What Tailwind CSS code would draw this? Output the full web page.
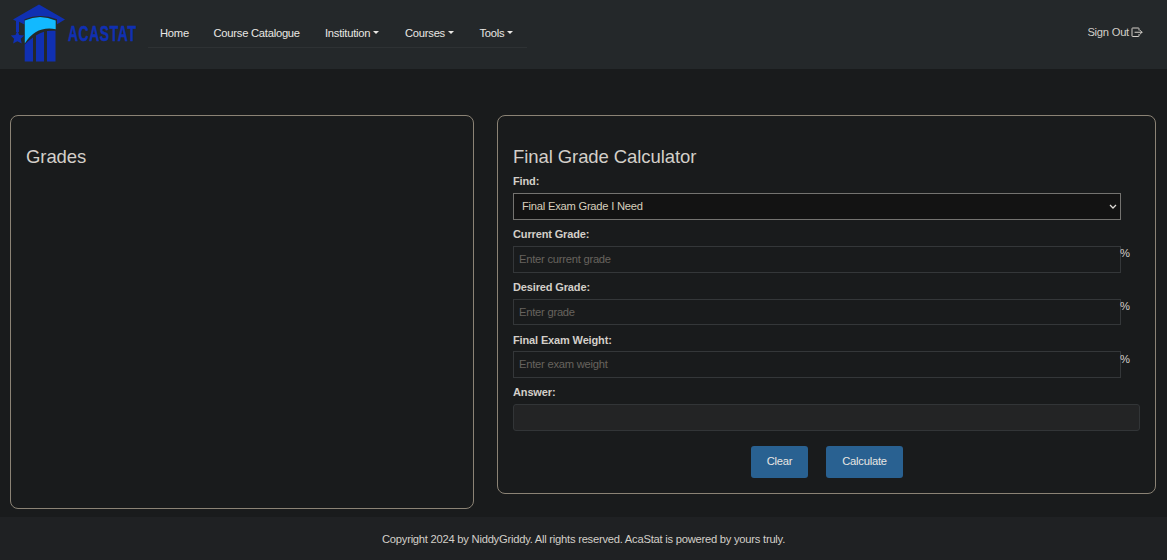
<!DOCTYPE html>
<html lang="en">
<head>
<meta charset="utf-8">
<title>AcaStat</title>
<script src="https://cdn.jsdelivr.net/npm/@tailwindcss/browser@4"></script>
</head>
<body class="h-[560px] overflow-hidden bg-[#191b1c] font-['Liberation_Sans',Arial,sans-serif] text-[11.200px] tracking-[-0.240px] leading-4 text-[#d3cfc9] flex flex-col">
<header class="h-[69px] shrink-0 bg-[#24282a] flex">
  <a class="w-[148px] shrink-0" aria-label="AcaStat">
    <svg width="148" height="69" viewBox="0 0 148 69">
      <g fill="#1030b2">
        <path d="M39 4.500 65 19.500 57 24.300V19.300Q40 12.500 24.500 19.300V24.500L19 21.800V32H16V21L13 19.500Z"/>
        <path d="M17.400 30.500 19.300 35 24.200 35.500 20.700 38.800 21.700 43.600 17.400 41.300 13.100 43.600 14.100 38.800 10.800 35.500 15.500 35Z"/>
        <path d="M24.700 44.500Q28.500 40.500 33 37.500V61.500H24.700ZM36 35.500Q40 33 44 31.700V61.500H36ZM47 31Q51 30.400 55.500 30.800V61.500H47Z"/>
      </g>
      <path fill="#12b9ff" d="M24.800 20.500Q40 13.500 55.700 20.500V29.200Q36 25.500 24.800 43.500Z"/>
      <text transform="translate(67.900 41) scale(.61 1)" font-family="Liberation Sans" font-weight="700" font-size="22.800" letter-spacing="1" stroke="#1030b2" stroke-width="0.500" fill="#1030b2">ACASTAT</text>
    </svg>
  </a>
  <nav class="mt-[18px] h-[30px] w-[379px] border-b border-[#2e3234] flex items-center text-[#e9e7e4] pl-3 whitespace-nowrap">
    <a class="w-[53.500px]">Home</a>
    <a class="w-[111.500px]">Course Catalogue</a>
    <a class="w-[80px] flex items-center gap-[3px]">Institution<i class="border-x-[3px] border-t-[3px] border-x-transparent"></i></a>
    <a class="w-[74.500px] flex items-center gap-[3px]">Courses<i class="border-x-[3px] border-t-[3px] border-x-transparent"></i></a>
    <a class="flex items-center gap-[3px]">Tools<i class="border-x-[3px] border-t-[3px] border-x-transparent"></i></a>
  </nav>
  <a class="ml-auto mr-6 mt-6 h-4 flex items-center gap-[2px]">Sign Out
    <svg width="12" height="11" viewBox="0 0 12 11" fill="none" stroke="#d3cfc9" stroke-linecap="round" stroke-linejoin="round"><path d="M8 3V1.500Q8 1 7.500 1H1.500Q1 1 1 1.500V9Q1 9.500 1.500 9.500H7.500Q8 9.500 8 9V7.500M4 5.250H11M9 3.250 11 5.250 9 7.250"/></svg>
  </a>
</header>
<main class="h-[448px] shrink-0 pt-[46px] pl-[10px] flex items-start gap-[23px]">
  <section class="w-[464px] h-[394px] rounded-lg border border-[#8b8375] pl-[15px] pt-[30px]">
    <h2 class="text-[18.500px] tracking-[-0.080px] leading-[22px]">Grades</h2>
  </section>
  <section class="w-[659px] h-[379px] rounded-lg border border-[#8b8375] pl-[15px] pt-[30px]">
    <h2 class="text-[18.500px] tracking-[-0.080px] leading-[22px]">Final Grade Calculator</h2>
    <label class="block mt-[5px] font-bold text-[11px] tracking-[-0.140px]">Find:</label>
    <div class="mt-[4px] w-[608px] h-[27px] border border-[#747370] bg-[#131313] flex items-center justify-between pl-[8px] pr-[3px] text-[#d8cfbd]"><span class="pb-px">Final Exam Grade I Need</span>
      <svg width="8" height="6" viewBox="0 0 8 6" fill="none" stroke="#dedbd6" stroke-width="1.300"><path d="M1 1 4 4 7 1"/></svg>
    </div>
    <label class="block mt-[6px] font-bold text-[11px] tracking-[-0.140px]">Current Grade:</label>
    <div class="mt-[4px] flex items-start"><div class="w-[608px] h-[27px] border border-[#343739] flex items-center pl-[5px] pb-px text-[#67635e]">Enter current grade</div><span class="-mt-px -ml-px">%</span></div>
    <label class="block mt-[6px] font-bold text-[11px] tracking-[-0.140px]">Desired Grade:</label>
    <div class="mt-[4px] flex items-start"><div class="w-[608px] h-[26px] border border-[#343739] flex items-center pl-[5px] pb-px text-[#67635e]">Enter grade</div><span class="-mt-px -ml-px">%</span></div>
    <label class="block mt-[7px] font-bold text-[11px] tracking-[-0.140px]">Final Exam Weight:</label>
    <div class="mt-[3px] flex items-start"><div class="w-[608px] h-[27px] border border-[#343739] flex items-center pl-[5px] pb-px text-[#67635e]">Enter exam weight</div><span class="-ml-px">%</span></div>
    <label class="block mt-[6px] font-bold text-[11px] tracking-[-0.140px]">Answer:</label>
    <div class="mt-[4px] w-[627px] h-[27px] rounded-[3px] border border-[#323537] bg-[#232425]"></div>
    <div class="mt-[15px] w-[627px] pl-[238px] flex gap-[18px] text-[#e8e6e3]">
      <button class="w-[57px] h-8 pb-[2px] rounded-[3px] bg-[#296191]">Clear</button>
      <button class="w-[77px] h-8 pb-[2px] rounded-[3px] bg-[#296191]">Calculate</button>
    </div>
  </section>
</main>
<footer class="h-[43px] bg-[#1f2123] text-center pt-[14px]">Copyright 2024 by NiddyGriddy. All rights reserved. AcaStat is powered by yours truly.</footer>
</body>
</html>
